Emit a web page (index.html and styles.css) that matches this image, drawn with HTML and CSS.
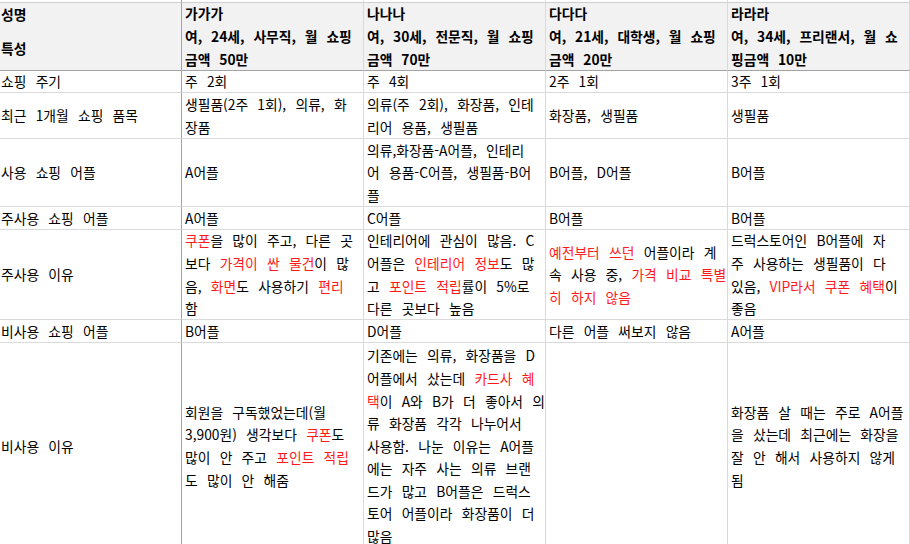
FILE: index.html
```html
<!DOCTYPE html>
<html lang="ko">
<head>
<meta charset="utf-8">
<link rel="stylesheet" href="styles.css">
</head>
<body>
<div class="sheet">
  <div class="cell lab top"></div><div class="cell top"></div><div class="cell top"></div><div class="cell top"></div><div class="cell top"></div>

  <div class="cell lab head corner"><span>성명</span><span>특성</span></div>
  <div class="cell head"><div>가가가<br>여, 24세, 사무직, 월 쇼핑<br>금액 50만</div></div>
  <div class="cell head"><div>나나나<br>여, 30세, 전문직, 월 쇼핑<br>금액 70만</div></div>
  <div class="cell head"><div>다다다<br>여, 21세, 대학생, 월 쇼핑<br>금액 20만</div></div>
  <div class="cell head"><div>라라라<br>여, 34세, 프리랜서, 월 쇼<br>핑금액 10만</div></div>

  <div class="cell lab"><div>쇼핑 주기</div></div>
  <div class="cell"><div>주 2회</div></div>
  <div class="cell"><div>주 4회</div></div>
  <div class="cell"><div>2주 1회</div></div>
  <div class="cell"><div>3주 1회</div></div>

  <div class="cell lab"><div>최근 1개월 쇼핑 품목</div></div>
  <div class="cell"><div>생필품(2주 1회), 의류, 화<br>장품</div></div>
  <div class="cell"><div>의류(주 2회), 화장품, 인테<br>리어 용품, 생필품</div></div>
  <div class="cell"><div>화장품, 생필품</div></div>
  <div class="cell"><div>생필품</div></div>

  <div class="cell lab"><div>사용 쇼핑 어플</div></div>
  <div class="cell"><div>A어플</div></div>
  <div class="cell"><div>의류,화장품-A어플, 인테리<br>어 용품-C어플, 생필품-B어<br>플</div></div>
  <div class="cell"><div>B어플, D어플</div></div>
  <div class="cell"><div>B어플</div></div>

  <div class="cell lab"><div>주사용 쇼핑 어플</div></div>
  <div class="cell"><div>A어플</div></div>
  <div class="cell"><div>C어플</div></div>
  <div class="cell"><div>B어플</div></div>
  <div class="cell"><div>B어플</div></div>

  <div class="cell lab"><div>주사용 이유</div></div>
  <div class="cell"><div><span class="r">쿠폰</span>을 많이 주고, 다른 곳<br>보다 <span class="r">가격이 싼 물건</span>이 많<br>음, <span class="r">화면</span>도 사용하기 <span class="r">편리</span><br>함</div></div>
  <div class="cell"><div>인테리어에 관심이 많음. C<br>어플은 <span class="r">인테리어 정보</span>도 많<br>고 <span class="r">포인트 적립</span>률이 5%로<br>다른 곳보다 높음</div></div>
  <div class="cell"><div><span class="r">예전부터 쓰던</span> 어플이라 계<br>속 사용 중, <span class="r">가격 비교 특별<br>히 하지 않음</span></div></div>
  <div class="cell"><div>드럭스토어인 B어플에 자<br>주 사용하는 생필품이 다<br>있음, <span class="r">VIP라서 쿠폰 혜택</span>이<br>좋음</div></div>

  <div class="cell lab"><div>비사용 쇼핑 어플</div></div>
  <div class="cell"><div>B어플</div></div>
  <div class="cell"><div>D어플</div></div>
  <div class="cell"><div>다른 어플 써보지 않음</div></div>
  <div class="cell"><div>A어플</div></div>

  <div class="cell lab"><div>비사용 이유</div></div>
  <div class="cell"><div>회원을 구독했었는데(월<br>3,900원) 생각보다 <span class="r">쿠폰</span>도<br>많이 안 주고 <span class="r">포인트 적립</span><br>도 많이 안 해줌</div></div>
  <div class="cell"><div>기존에는 의류, 화장품을 D<br>어플에서 샀는데 <span class="r">카드사 혜<br>택</span>이 A와 B가 더 좋아서 의<br>류 화장품 각각 나누어서<br>사용함. 나눈 이유는 A어플<br>에는 자주 사는 의류 브랜<br>드가 많고 B어플은 드럭스<br>토어 어플이라 화장품이 더<br>많음</div></div>
  <div class="cell"><div></div></div>
  <div class="cell"><div>화장품 살 때는 주로 A어플<br>을 샀는데 최근에는 화장을<br>잘 안 해서 사용하지 않게<br>됨</div></div>
</div>
</body>
</html>
```

FILE: styles.css
```css
html, body {
  margin: 0;
  padding: 0;
  background: #ffffff;
}
.sheet {
  display: grid;
  grid-template-columns: 182px 182px 182px 182px 182px;
  grid-template-rows: 3px 68px 22px 46px 68px 23px 90px 23px 207px;
  width: 910px;
  font-family: "Noto Sans CJK KR", "Noto Sans", sans-serif;
  font-size: 13.8px;
  word-spacing: 5.4px;
  color: #000000;
}
.cell {
  box-sizing: border-box;
  border-right: 1px solid #dadada;
  border-bottom: 1px solid #dadada;
  padding: 0 2px 0 3px;
  line-height: 22.6px;
  display: flex;
  align-items: center;
  white-space: nowrap;
  min-width: 0;
}
.cell.lab {
  border-right-color: #a3a3a3;
  padding-left: 1px;
}
.cell.top {
  border-bottom-color: #cfcfcf;
}
.cell.head {
  background: #f2f2f2;
  font-weight: 700;
  line-height: 23px;
  word-spacing: 5px;
  border-bottom-color: #a3a3a3;
}
.cell.corner {
  flex-direction: column;
  align-items: flex-start;
  justify-content: space-between;
  padding-top: 0;
  padding-bottom: 10px;
}
.r { color: #ff1a1a; }
```
